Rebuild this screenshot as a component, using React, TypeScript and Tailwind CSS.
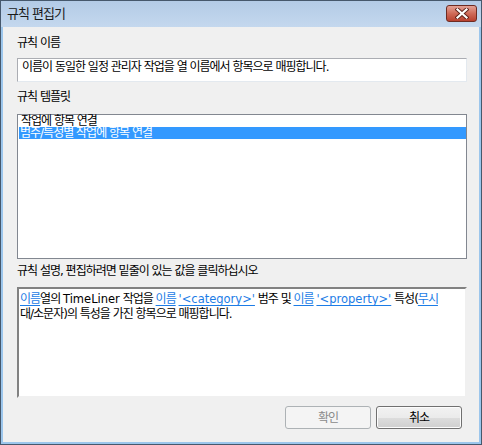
import React from "react";

const ko = { fontFamily: '"DejaVu Sans", "Noto Sans CJK KR", sans-serif' };

function Link({ children }: { children: React.ReactNode }) {
  return <span className="text-[#1c7ce6] underline underline-offset-[2px]">{children}</span>;
}

function Latin({ children }: { children: React.ReactNode }) {
  return <span className="text-[11.5px] tracking-normal">{children}</span>;
}

export default function App() {
  return (
    <div
      style={ko}
      className="w-[482px] h-[445px] flex flex-col bg-[#9cc6ec] border border-[#46586c] text-[12px] tracking-[-1px] text-black overflow-hidden"
    >
      {/* title bar */}
      <div className="h-[26px] shrink-0 flex justify-between items-start bg-gradient-to-b from-[#b3cbe6] to-[#c4d8ee] pl-[6px] pr-[4px]">
        <span className="mt-[6px] leading-[14px] text-[13px] text-[#1a1a1a]">규칙 편집기</span>
        <button className="mt-[4px] w-[31px] h-[17px] rounded-[3px] border border-[#6e2b22] bg-gradient-to-b from-[#e3a195] via-[#cf6a58] to-[#b8402e] flex items-center justify-center">
          <svg width="14" height="11" viewBox="0 0 14 11">
            <path d="M2.5 1.5 L11.5 9.5 M11.5 1.5 L2.5 9.5" stroke="#5b2018" strokeWidth="4" strokeLinecap="square" />
            <path d="M2.5 1.5 L11.5 9.5 M11.5 1.5 L2.5 9.5" stroke="#ffffff" strokeWidth="2.2" strokeLinecap="square" />
          </svg>
        </button>
      </div>

      {/* client area */}
      <div className="flex-1 ml-[2px] mr-[2px] mb-[2px] bg-[#f0f0f0] flex flex-col pl-[14px] pr-[12px]">
        <div className="mt-[10px] leading-[12px]">규칙 이름</div>
        <div className="mt-[9px] h-[24px] bg-white border border-[#abadb3] border-r-[#e3e9ef] border-b-[#e3e9ef] pl-[4px] pt-[1px] leading-[14px]">
          이름이 동일한 일정 관리자 작업을 열 이름에서 항목으로 매핑합니다.
        </div>

        <div className="mt-[9px] leading-[12px]">규칙 템플릿</div>
        <div className="mt-[11px] h-[145px] bg-white border border-[#828790] pt-[0px] flex flex-col">
          <div className="h-[12px] leading-[12px] pl-[3px]">작업에 항목 연결</div>
          <div className="h-[12px] leading-[12px] ml-[1px] pl-[1px] bg-[#3399ff] text-white">범주/특성별 작업에 항목 연결</div>
        </div>

        <div className="mt-[6px] leading-[12px]">규칙 설명, 편집하려면 밑줄이 있는 값을 클릭하십시오</div>
        <div className="mt-[10px] h-[111px] bg-white border-2 border-[#a0a0a0] border-t-[#828282] border-l-[#828282] border-r-[#f0f0f0] border-b-[#f0f0f0] pl-[1px] pt-[3px] leading-[15px] whitespace-nowrap">
          <div>
            <Link>이름</Link>열의 <Latin>TimeLiner</Latin> 작업을 <Link>이름</Link> <Link><Latin>'&lt;category&gt;'</Latin></Link> 범주 및 <Link>이름</Link> <Link><Latin>'&lt;property&gt;'</Latin></Link> 특성(<Link>무시</Link>
          </div>
          <div>대/소문자)의 특성을 가진 항목으로 매핑합니다.</div>
        </div>

        <div className="mt-[8px] flex justify-end gap-[5px] pr-[5px]">
          <button className="w-[86px] h-[23px] rounded-[3px] border border-[#adb2b5] bg-[#f4f4f4] text-[#8a8a8a] leading-[12px]">
            확인
          </button>
          <button className="w-[86px] h-[23px] rounded-[3px] border border-[#707070] bg-[linear-gradient(to_bottom,#f2f2f2_0%,#ebebeb_50%,#dddddd_51%,#cfcfcf_100%)] shadow-[inset_0_0_0_1px_#fcfcfc] leading-[12px]">
            취소
          </button>
        </div>
      </div>
    </div>
  );
}
